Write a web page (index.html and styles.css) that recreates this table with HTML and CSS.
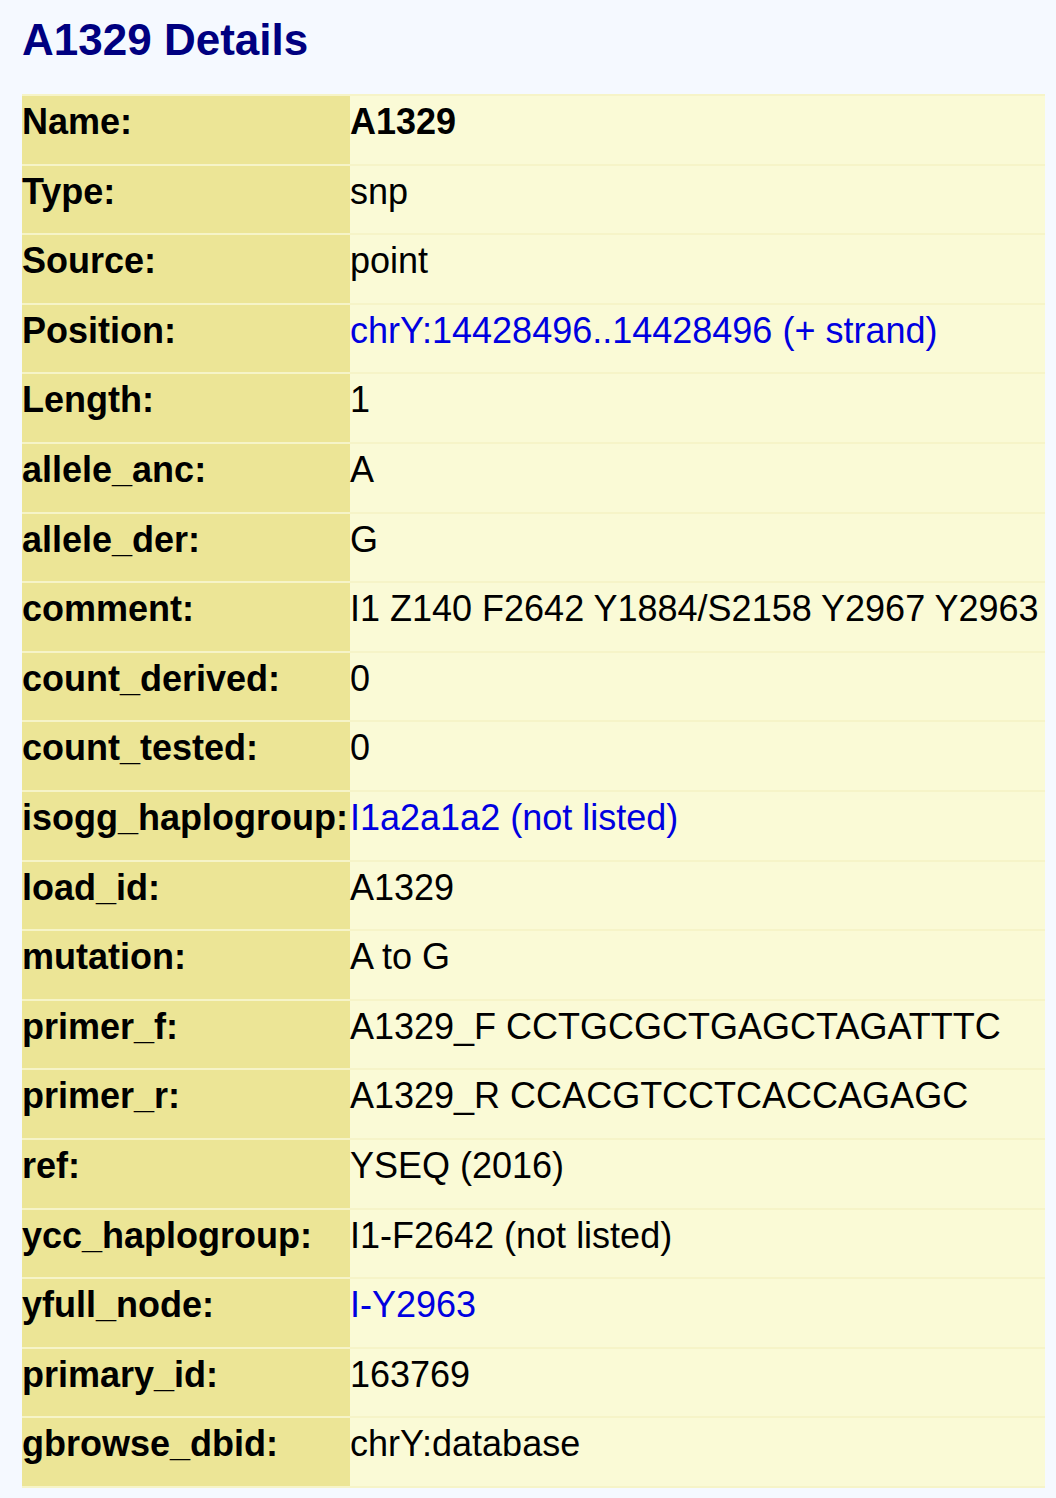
FILE: index.html
```html
<!DOCTYPE html>
<html lang="en">
  <head>
    <meta charset="UTF-8">
    <title>A1329 Details</title>
    <link rel="stylesheet" href="styles.css">
  </head>
  <body>
    <h1 class="title">A1329 Details</h1>

    <!-- Feature attributes -->
    <table class="details">
      <tr><th>Name:</th><td><b>A1329</b></td></tr>
      <tr><th>Type:</th><td>snp</td></tr>
      <tr><th>Source:</th><td>point</td></tr>
      <tr><th>Position:</th><td><a href="#">chrY:14428496..14428496 (+ strand)</a></td></tr>
      <tr><th>Length:</th><td>1</td></tr>
      <tr><th>allele_anc:</th><td>A</td></tr>
      <tr><th>allele_der:</th><td>G</td></tr>
      <tr><th>comment:</th><td>I1 Z140 F2642 Y1884/S2158 Y2967 Y2963</td></tr>
      <tr><th>count_derived:</th><td>0</td></tr>
      <tr><th>count_tested:</th><td>0</td></tr>
      <tr><th>isogg_haplogroup:</th><td><a href="#">I1a2a1a2 (not listed)</a></td></tr>
      <tr><th>load_id:</th><td>A1329</td></tr>
      <tr><th>mutation:</th><td>A to G</td></tr>
      <tr><th>primer_f:</th><td>A1329_F CCTGCGCTGAGCTAGATTTC</td></tr>
      <tr><th>primer_r:</th><td>A1329_R CCACGTCCTCACCAGAGC</td></tr>
      <tr><th>ref:</th><td>YSEQ (2016)</td></tr>
      <tr><th>ycc_haplogroup:</th><td>I1-F2642 (not listed)</td></tr>
      <tr><th>yfull_node:</th><td><a href="#">I-Y2963</a></td></tr>
      <tr><th>primary_id:</th><td>163769</td></tr>
      <tr><th>gbrowse_dbid:</th><td>chrY:database</td></tr>
    </table>
  </body>
</html>
```

FILE: styles.css
```css
body {
  margin: 0;
  padding: 14.5px 11px 0 22px;
  background-color: #f5f9ff;
  font-family: 'Liberation Sans', Arial, sans-serif;
  color: #000;
}

.title {
  margin: 0;
  font-size: 44px;
  font-weight: bold;
  color: #000080;
}

.details {
  margin-top: 29.5px;
  width: 1023px;
  border-collapse: separate;
  border-spacing: 0 2px;
  background-color: #f6f4c8;
  font-size: 36px;
}

.details th,
.details td {
  padding: 6px 0 22px;
  line-height: 39.6px;
  vertical-align: top;
  text-align: left;
  white-space: nowrap;
}

.details th {
  width: 328px;
  font-weight: bold;
  background-color: #ece596;
}

.details td {
  background-color: #fafad6;
}

.details a {
  color: #0000e0;
  text-decoration: none;
}
```
